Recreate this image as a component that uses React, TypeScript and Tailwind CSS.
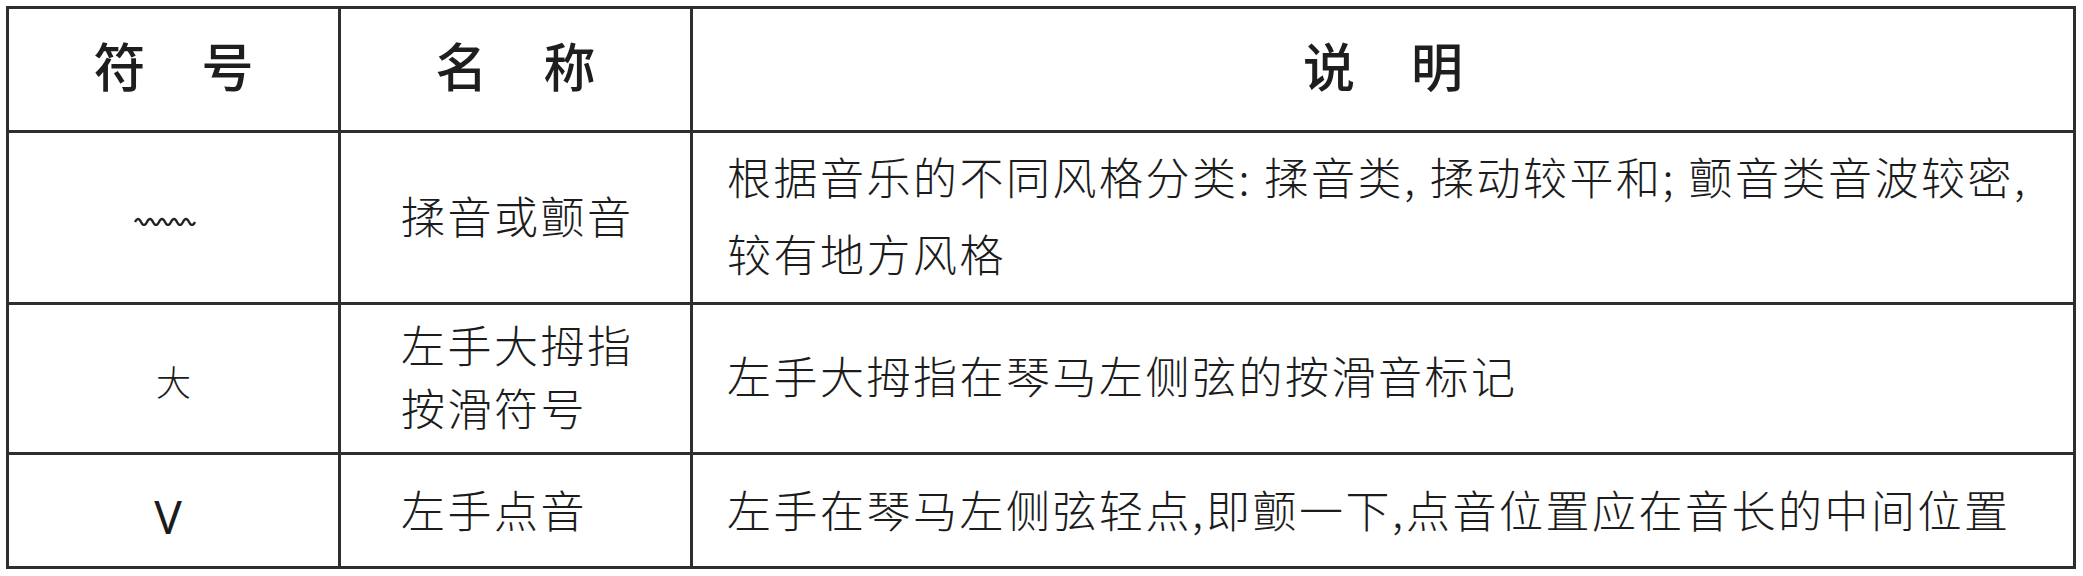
const cjk = "font-['Noto_Sans_CJK_SC',sans-serif]";

function Wave() {
  return (
    <svg width="62" height="10" viewBox="0 0 62 10" fill="none">
      <path
        d="M1 6 Q4 0 7 6 T13 6 T19 6 T25 6 T31 6 T37 6 T43 6 T49 6 T55 6 T61 6"
        stroke="#222"
        strokeWidth="2.4"
        strokeLinejoin="round"
      />
    </svg>
  );
}

function Head({ a, b }: { a: string; b: string }) {
  return (
    <div
      className={`flex items-center justify-center gap-[56px] pb-[10px] text-[52px] font-medium leading-none text-[#1e1e1e] ${cjk}`}
    >
      <span>{a}</span>
      <span>{b}</span>
    </div>
  );
}

function P({ c, w = 26 }: { c: string; w?: number }) {
  return (
    <span className="inline-block tracking-normal" style={{ width: w }}>
      {c}
    </span>
  );
}

export default function App() {
  const cell = "border-r-[3px] border-b-[3px] border-[#2e2e2e]";
  const body = `text-[44px] font-light tracking-[2.5px] text-[#1c1c1c] ${cjk}`;

  return (
    <div className="min-h-[576px] w-[2083px] bg-white pl-[6px] pt-[6px]">
      <div className="grid w-[2070px] grid-cols-[332px_352px_1fr] grid-rows-[124px_172px_150px_111px] border-[3px] border-[#2e2e2e]">
        {/* header */}
        <div className={`${cell} flex items-center justify-center`}>
          <Head a="符" b="号" />
        </div>
        <div className={`${cell} flex items-center justify-center`}>
          <Head a="名" b="称" />
        </div>
        <div className="flex items-center justify-center border-b-[3px] border-[#2e2e2e]">
          <Head a="说" b="明" />
        </div>

        {/* row 1 */}
        <div className={`${cell} flex items-center justify-center pr-[17px] pt-[7px]`}>
          <Wave />
        </div>
        <div className={`${cell} flex items-center pl-[60px] pb-[5px] leading-none ${body}`}>
          揉音或颤音
        </div>
        <div className={`flex items-center border-b-[3px] border-[#2e2e2e] pl-[34px] pb-[6px] leading-[77px] ${body}`}>
          <div>
            <div className="whitespace-nowrap">
              根据音乐的不同风格分类<P c=":" />揉音类<P c="," />揉动较平和<P c=";" />颤音类音波较密<P c="," />
            </div>
            <div>较有地方风格</div>
          </div>
        </div>

        {/* row 2 */}
        <div
          className={`${cell} flex items-center justify-center pt-[4px] text-[35px] font-light leading-none text-[#1c1c1c] ${cjk}`}
        >
          大
        </div>
        <div className={`${cell} flex items-center pl-[60px] pb-[6px] leading-[63px] ${body}`}>
          <div>
            <div>左手大拇指</div>
            <div>按滑符号</div>
          </div>
        </div>
        <div className={`flex items-center border-b-[3px] border-[#2e2e2e] pl-[34px] pb-[7px] leading-none ${body}`}>
          左手大拇指在琴马左侧弦的按滑音标记
        </div>

        {/* row 3 */}
        <div
          className={`flex items-center justify-center border-r-[3px] border-[#2e2e2e] pr-[11px] pt-[10px] font-['Noto_Sans','Liberation_Sans',sans-serif] text-[46px] leading-none text-[#1c1c1c]`}
        >
          V
        </div>
        <div className={`flex items-center border-r-[3px] border-[#2e2e2e] pl-[60px] pb-[4px] leading-none ${body}`}>
          左手点音
        </div>
        <div className={`flex items-center pl-[34px] pb-[4px] leading-none whitespace-nowrap ${body}`}>
          左手在琴马左侧弦轻点<P c="," w={14} />即颤一下<P c="," w={14} />点音位置应在音长的中间位置
        </div>
      </div>
    </div>
  );
}
